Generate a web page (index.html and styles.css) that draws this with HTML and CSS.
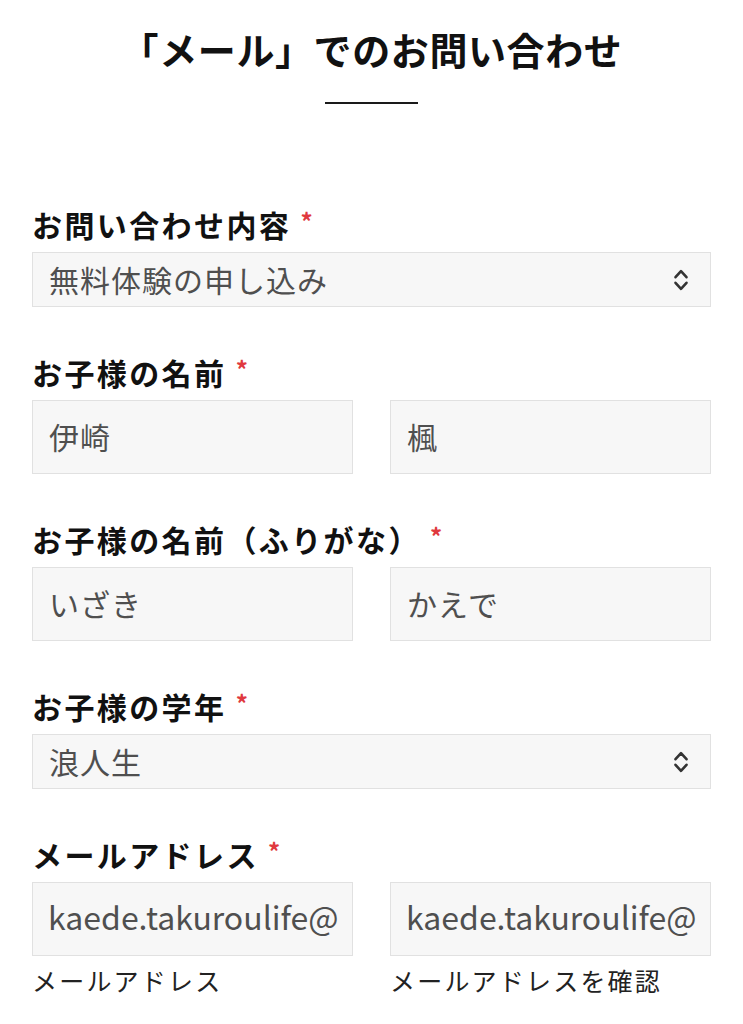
FILE: index.html
```html
<!DOCTYPE html>
<html lang="ja">
<head>
<meta charset="utf-8">
<title>「メール」でのお問い合わせ</title>
<link rel="stylesheet" href="styles.css">
</head>
<body>
<main class="page">
  <header class="head">
    <h1 class="title">「メール」でのお問い合わせ</h1>
    <div class="rule"></div>
  </header>

  <form class="form">
    <div class="field">
      <div class="label">お問い合わせ内容 <span class="req">*</span></div>
      <div class="select">
        <span class="value">無料体験の申し込み</span>
        <svg class="chev" width="16" height="26" viewBox="0 0 16 26" aria-hidden="true">
          <path d="M2.5 10.2 L8 4.2 L13.5 10.2 M2.5 15.8 L8 21.8 L13.5 15.8" fill="none" stroke="#333" stroke-width="2.6" stroke-linecap="round" stroke-linejoin="round"/>
        </svg>
      </div>
    </div>

    <div class="field">
      <div class="label">お子様の名前 <span class="req">*</span></div>
      <div class="pair">
        <div class="input">伊崎</div>
        <div class="input">楓</div>
      </div>
    </div>

    <div class="field">
      <div class="label">お子様の名前（ふりがな） <span class="req">*</span></div>
      <div class="pair">
        <div class="input">いざき</div>
        <div class="input">かえで</div>
      </div>
    </div>

    <div class="field">
      <div class="label">お子様の学年 <span class="req">*</span></div>
      <div class="select">
        <span class="value">浪人生</span>
        <svg class="chev" width="16" height="26" viewBox="0 0 16 26" aria-hidden="true">
          <path d="M2.5 10.2 L8 4.2 L13.5 10.2 M2.5 15.8 L8 21.8 L13.5 15.8" fill="none" stroke="#333" stroke-width="2.6" stroke-linecap="round" stroke-linejoin="round"/>
        </svg>
      </div>
    </div>

    <div class="field">
      <div class="label">メールアドレス <span class="req">*</span></div>
      <div class="pair">
        <div class="col">
          <div class="input email">kaede.takuroulife@</div>
          <div class="sub">メールアドレス</div>
        </div>
        <div class="col">
          <div class="input email">kaede.takuroulife@</div>
          <div class="sub">メールアドレスを確認</div>
        </div>
      </div>
    </div>
  </form>
</main>
</body>
</html>
```

FILE: styles.css
```css
html, body {
  margin: 0;
  background: #ffffff;
}

body {
  font-family: "Noto Sans CJK JP", "Noto Sans", sans-serif;
  color: #111111;
}

.page {
  padding: 27px 32px 0;
}

.head {
  display: flex;
  flex-direction: column;
  align-items: center;
}

.title {
  margin: 0;
  font-size: 38px;
  line-height: 44px;
  font-weight: 700;
  letter-spacing: 0.6px;
  color: #111;
}

.rule {
  width: 93px;
  height: 2px;
  background: #1a1a1a;
  margin-top: 31px;
}

.form {
  margin-top: 100px;
}

.field {
  margin-bottom: 45px;
}

.label {
  font-size: 30px;
  line-height: 40px;
  font-weight: 700;
  letter-spacing: 2.4px;
  margin-bottom: 8px;
  color: #111;
  white-space: nowrap;
}

.req {
  color: #e0393e;
  font-size: 24px;
  font-weight: 700;
  vertical-align: 6px;
  line-height: 1;
}

.select {
  display: flex;
  align-items: center;
  justify-content: space-between;
  height: 55px;
  box-sizing: border-box;
  border: 1px solid #e1e1e1;
  background: #f7f7f7;
  padding: 0 21px 2px 16px;
  font-size: 30px;
  line-height: 40px;
  letter-spacing: 1px;
  color: #4f4f4f;
}

.chev {
  display: block;
  flex: none;
  margin-top: 2px;
}

.pair {
  display: grid;
  grid-template-columns: 1fr 1fr;
  column-gap: 37px;
}

.col {
  display: flex;
  flex-direction: column;
  min-width: 0;
}

.input {
  display: flex;
  align-items: center;
  height: 74px;
  box-sizing: border-box;
  border: 1px solid #e1e1e1;
  background: #f7f7f7;
  padding: 0 16px 2px;
  font-size: 30px;
  line-height: 40px;
  letter-spacing: 1px;
  color: #4f4f4f;
  white-space: nowrap;
  overflow: hidden;
}

.input.email {
  font-size: 32px;
  letter-spacing: 0;
  padding: 0 6px 6px 15px;
}

.sub {
  margin-top: 7px;
  font-size: 25px;
  line-height: 34px;
  letter-spacing: 2.2px;
  color: #222;
  white-space: nowrap;
}
```
